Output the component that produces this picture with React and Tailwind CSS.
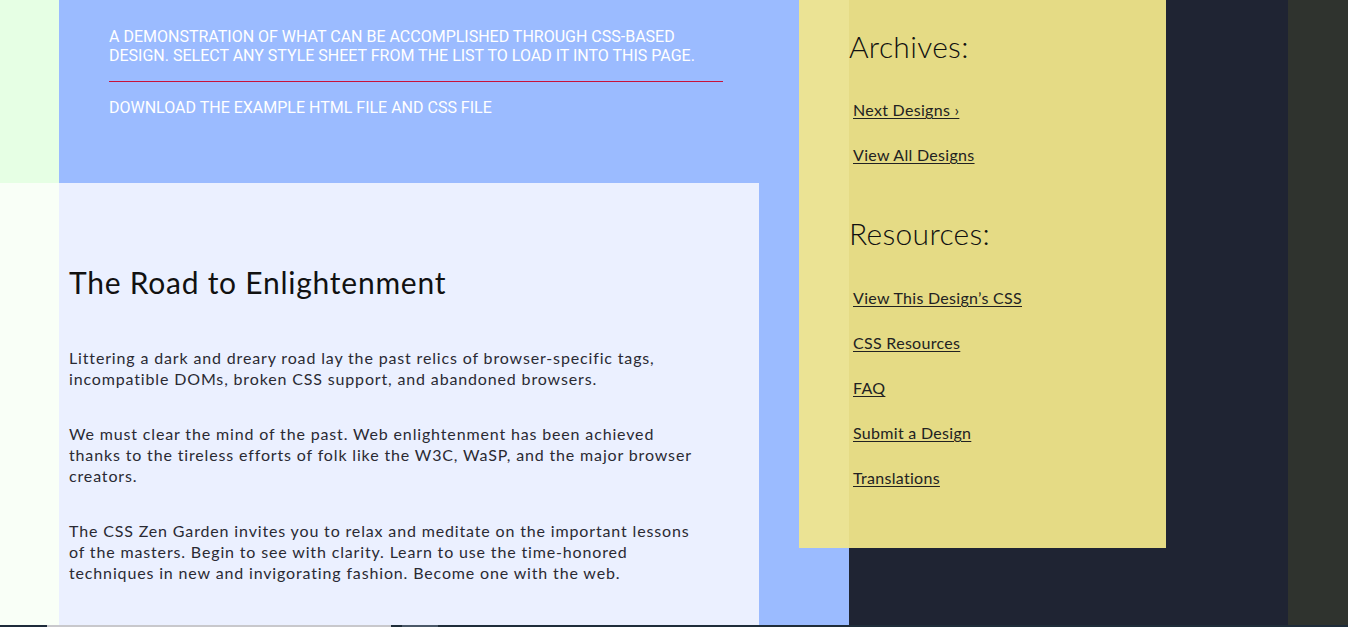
import React from "react";

const body = { fontFamily: "Lato, 'Noto Sans', sans-serif" };
const head = { fontFamily: "Roboto, 'Noto Sans', sans-serif" };

function SideLink({ children }) {
  return (
    <a href="#" className="block h-[45px] text-[16px] leading-[21px] tracking-[0.3px] text-[#222] underline underline-offset-2 decoration-1 pl-[4px]">
      {children}
    </a>
  );
}

export default function App() {
  return (
    <div className="w-[1348px] h-[627px] overflow-hidden flex flex-col" style={body}>
      <div className="flex h-[625px]">
        {/* left strip */}
        <div className="w-[59px] flex flex-col shrink-0">
          <div className="h-[183px] bg-[#e6ffe4]" />
          <div className="flex-1 bg-[#f9fff7]" />
        </div>

        {/* main blue column */}
        <div className="w-[740px] shrink-0 flex flex-col bg-[#9bbbff]">
          <header className="h-[183px] pl-[50px] pt-[27px]" style={head}>
            <div className="w-[614px] text-white uppercase text-[16px] leading-[19px]">
              <p>A demonstration of what can be accomplished through CSS-based<br />design. Select any style sheet from the list to load it into this page.</p>
              <div className="h-px bg-[#c8123a] mt-[16px] mb-[16px]" />
              <p>Download the example html file and css file</p>
            </div>
          </header>
          <main className="w-[700px] flex-1 bg-[#ebf0ff] pl-[10px] pt-[81px] text-[#2a2a33]">
            <h3 className="text-[30px] leading-[36px] text-[#111] tracking-[0.75px]">The Road to Enlightenment</h3>
            <div className="mt-[47px] text-[16px] leading-[21px] tracking-[0.85px] flex flex-col gap-[34px]">
              <p>Littering a dark and dreary road lay the past relics of browser-specific tags,<br />incompatible DOMs, broken CSS support, and abandoned browsers.</p>
              <p>We must clear the mind of the past. Web enlightenment has been achieved<br />thanks to the tireless efforts of folk like the W3C, WaSP, and the major browser<br />creators.</p>
              <p>The CSS Zen Garden invites you to relax and meditate on the important lessons<br />of the masters. Begin to see with clarity. Learn to use the time-honored<br />techniques in new and invigorating fashion. Become one with the web.</p>
            </div>
          </main>
        </div>

        {/* sidebar column */}
        <div className="w-[367px] shrink-0 flex flex-col">
          <aside className="h-[548px] flex bg-[#e5db85]">
            <div className="w-[50px] bg-[#ebe394]" />
            <div className="flex-1 pt-[28px]">
              <h3 className="text-[30px] leading-[36px] font-light text-[#111] tracking-[0.3px]">Archives:</h3>
              <div className="mt-[35px]">
                <SideLink>Next Designs ›</SideLink>
                <SideLink>View All Designs</SideLink>
              </div>
              <h3 className="mt-[26px] text-[30px] leading-[36px] font-light text-[#111] tracking-[0.3px]">Resources:</h3>
              <div className="mt-[36px]">
                <SideLink>View This Design’s CSS</SideLink>
                <SideLink>CSS Resources</SideLink>
                <SideLink>FAQ</SideLink>
                <SideLink>Submit a Design</SideLink>
                <SideLink>Translations</SideLink>
              </div>
            </div>
          </aside>
          <div className="flex-1 flex">
            <div className="w-[50px] bg-[#9bbbff]" />
            <div className="flex-1 bg-[#1f2433]" />
          </div>
        </div>

        <div className="w-[122px] shrink-0 bg-[#1f2433]" />
        <div className="flex-1 bg-[#2f332e]" />
      </div>
      {/* bottom edge strip */}
      <div className="h-[2px] flex">
        <div className="w-[47px] bg-[#1e2b3a]" />
        <div className="w-[344px] bg-[#c8c8cc]" />
        <div className="w-[11px] bg-[#1f2d3a]" />
        <div className="w-[36px] bg-[#4a5868]" />
        <div className="flex-1 bg-[#1f2d3a]" />
      </div>
    </div>
  );
}
